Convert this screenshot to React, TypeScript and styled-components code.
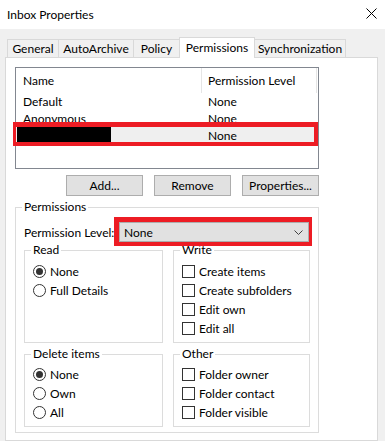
import React from 'react';
import styled, { createGlobalStyle } from 'styled-components';

const GlobalStyle = createGlobalStyle`
  html, body {
    margin: 0;
    padding: 0;
    background: #f0f0f0;
  }
  body {
    font-family: Lato, 'Noto Sans', sans-serif;
    font-size: 12px;
    color: #000;
  }
  * {
    box-sizing: border-box;
  }
`;

const tabs = [
  { label: 'General', width: 52 },
  { label: 'AutoArchive', width: 76 },
  { label: 'Policy', width: 47 },
  { label: 'Permissions', width: 76, active: true },
  { label: 'Synchronization', width: 92 },
];

const members = [
  { name: 'Default', level: 'None' },
  { name: 'Anonymous', level: 'None' },
  { name: '', level: 'None', hidden: true },
];

const App = () => {
  return (
    <Window>
      <GlobalStyle />
      <TitleBar>
        <Title>Inbox Properties</Title>
        <CloseButton aria-label="Close">
          <svg width="11" height="11" viewBox="0 0 11 11">
            <path d="M0.5 0.5 L10.5 10.5 M10.5 0.5 L0.5 10.5" stroke="#000" strokeWidth="1" />
          </svg>
        </CloseButton>
      </TitleBar>
      <Body>
        <TabStrip>
          {tabs.map((t) => (
            <Tab key={t.label} $width={t.width} $active={!!t.active}>
              {t.label}
            </Tab>
          ))}
        </TabStrip>
        <Panel>
          <Column>
            <ListBox>
              <ListHeader>
                <HeaderCell $pad={7}>Name</HeaderCell>
                <HeaderCell $pad={6}>Permission Level</HeaderCell>
              </ListHeader>
              {members.map((m, i) => (
                <ListRow key={i} $selected={!!m.hidden}>
                  <Cell $pad={7}>{m.hidden ? <Redacted /> : m.name}</Cell>
                  <Cell $pad={6}>{m.level}</Cell>
                </ListRow>
              ))}
            </ListBox>
            <ButtonRow>
              <Button>Add...</Button>
              <Button>Remove</Button>
              <Button>Properties...</Button>
            </ButtonRow>
            <Group $pt={8} $pb={5}>
              <Legend>Permissions</Legend>
              <LevelRow>
                <LevelLabel>Permission Level:</LevelLabel>
                <Select>
                  <span>None</span>
                  <svg width="9" height="5" viewBox="0 0 9 5">
                    <path d="M0.5 0.5 L4.5 4.5 L8.5 0.5" stroke="#404040" strokeWidth="1" fill="none" />
                  </svg>
                </Select>
              </LevelRow>
              <GroupGrid>
                <Group $pt={5} $pb={4}>
                  <Legend>Read</Legend>
                  <Option>
                    <Radio $checked />
                    None
                  </Option>
                  <Option>
                    <Radio />
                    Full Details
                  </Option>
                </Group>
                <Group $pt={5} $pb={4}>
                  <Legend>Write</Legend>
                  <Option>
                    <Check />
                    Create items
                  </Option>
                  <Option>
                    <Check />
                    Create subfolders
                  </Option>
                  <Option>
                    <Check />
                    Edit own
                  </Option>
                  <Option>
                    <Check />
                    Edit all
                  </Option>
                </Group>
                <Group $pt={4} $pb={4}>
                  <Legend>Delete items</Legend>
                  <Option>
                    <Radio $checked />
                    None
                  </Option>
                  <Option>
                    <Radio />
                    Own
                  </Option>
                  <Option>
                    <Radio />
                    All
                  </Option>
                </Group>
                <Group $pt={4} $pb={4}>
                  <Legend>Other</Legend>
                  <Option>
                    <Check />
                    Folder owner
                  </Option>
                  <Option>
                    <Check />
                    Folder contact
                  </Option>
                  <Option>
                    <Check />
                    Folder visible
                  </Option>
                </Group>
              </GroupGrid>
            </Group>
          </Column>
        </Panel>
      </Body>
    </Window>
  );
};

export default App;

const Window = styled.div`
  width: 385px;
  height: 441px;
  overflow: hidden;
  display: flex;
  flex-direction: column;
  background: #f0f0f0;
`;

const TitleBar = styled.div`
  height: 29px;
  flex-shrink: 0;
  display: flex;
  align-items: center;
  justify-content: space-between;
  padding: 0 8px 0 7px;
  background: #fff;
`;

const Title = styled.div`
  font-size: 12px;
  line-height: 16px;
  margin-top: 1px;
`;

const CloseButton = styled.div`
  display: flex;
  width: 11px;
  height: 11px;
  margin-top: -2px;
`;

const Body = styled.div`
  flex: 1;
  display: flex;
  flex-direction: column;
  padding: 8px 7px 0 5px;
`;

const TabStrip = styled.div`
  display: flex;
  align-items: flex-end;
  height: 20px;
  padding-left: 2px;
  position: relative;
  z-index: 1;
`;

const Tab = styled.div<{ $width: number; $active: boolean }>`
  width: ${({ $width }) => $width}px;
  height: ${({ $active }) => ($active ? 21 : 18)}px;
  margin-bottom: ${({ $active }) => ($active ? -1 : 0)}px;
  display: flex;
  align-items: center;
  justify-content: center;
  padding-bottom: ${({ $active }) => ($active ? 2 : 0)}px;
  border: 1px solid #d9d9d9;
  border-bottom: none;
  background: ${({ $active }) => ($active ? '#fff' : '#f0f0f0')};
  white-space: nowrap;
  & + & {
    margin-left: -1px;
  }
`;

const Panel = styled.div`
  flex: 1;
  background: #fff;
  border: 1px solid #d9d9d9;
  padding: 9px 0 0 9px;
`;

const Column = styled.div`
  width: 304px;
  display: flex;
  flex-direction: column;
`;

const ListBox = styled.div`
  height: 102px;
  border: 1px solid #828790;
  background: #fff;
`;

const ListHeader = styled.div`
  display: grid;
  grid-template-columns: 186px 115px;
  height: 25px;
`;

const HeaderCell = styled.div<{ $pad: number }>`
  display: flex;
  align-items: center;
  padding-left: ${({ $pad }) => $pad}px;
  border-right: 1px solid #e5e5e5;
`;

const ListRow = styled.div<{ $selected: boolean }>`
  display: grid;
  grid-template-columns: 186px 115px;
  height: 17px;
  position: relative;
  background: ${({ $selected }) => ($selected ? '#efefef' : 'transparent')};
  ${({ $selected }) =>
    $selected &&
    `
    &::after {
      content: '';
      position: absolute;
      top: -5px;
      bottom: -2px;
      left: -3px;
      right: 0px;
      border-style: solid;
      border-color: #ed1c24;
      border-width: 5px 4px 4px 3px;
    }
  `}
`;

const Cell = styled.div<{ $pad: number }>`
  display: flex;
  align-items: center;
  padding-left: ${({ $pad }) => $pad}px;
  white-space: nowrap;
`;

const Redacted = styled.div`
  width: 94px;
  height: 15px;
  margin-left: -6px;
  margin-top: -2px;
  background: #000;
`;

const ButtonRow = styled.div`
  display: flex;
  justify-content: flex-end;
  gap: 11px;
  margin-top: 6px;
`;

const Button = styled.div`
  width: 77px;
  height: 21px;
  display: flex;
  align-items: center;
  justify-content: center;
  background: #e1e1e1;
  border: 1px solid #adadad;
`;

const Group = styled.fieldset<{ $pt: number; $pb: number }>`
  margin: 0;
  min-width: 0;
  border: 1px solid #dcdcdc;
  padding: ${({ $pt, $pb }) => `${$pt}px 8px ${$pb}px 8px`};
  margin-top: 4px;
`;

const Legend = styled.legend`
  padding: 0 2px;
  margin-left: -2px;
  line-height: 14px;
  font-size: 12px;
`;

const LevelRow = styled.div`
  display: flex;
  align-items: center;
  height: 20px;
`;

const LevelLabel = styled.div`
  width: 95px;
  white-space: nowrap;
`;

const Select = styled.div`
  width: 190px;
  height: 20px;
  display: flex;
  align-items: center;
  justify-content: space-between;
  padding: 0 5px 0 4px;
  background: #e1e1e1;
  border: 1px solid #adadad;
  position: relative;
  &::after {
    content: '';
    position: absolute;
    top: -6px;
    bottom: -5px;
    left: -6px;
    right: -4px;
    border-style: solid;
    border-color: #ed1c24;
    border-width: 5px 3px 4px 5px;
  }
`;

const GroupGrid = styled.div`
  display: grid;
  grid-template-columns: 139px 137px;
  column-gap: 10px;
  margin-top: 1px;
  & > fieldset {
    margin-top: 0;
  }
  & > fieldset:nth-child(n + 3) {
    margin-top: 4px;
  }
`;

const Option = styled.div`
  display: flex;
  align-items: center;
  gap: 4px;
  height: 19px;
  white-space: nowrap;
`;

const Radio = styled.span<{ $checked?: boolean }>`
  width: 13px;
  height: 13px;
  border-radius: 50%;
  border: 1px solid #333;
  background: #fff;
  display: flex;
  align-items: center;
  justify-content: center;
  flex-shrink: 0;
  &::after {
    content: '';
    width: 7px;
    height: 7px;
    border-radius: 50%;
    background: ${({ $checked }) => ($checked ? '#333' : 'transparent')};
  }
`;

const Check = styled.span`
  width: 13px;
  height: 13px;
  border: 1px solid #333;
  background: #fff;
  flex-shrink: 0;
`;
